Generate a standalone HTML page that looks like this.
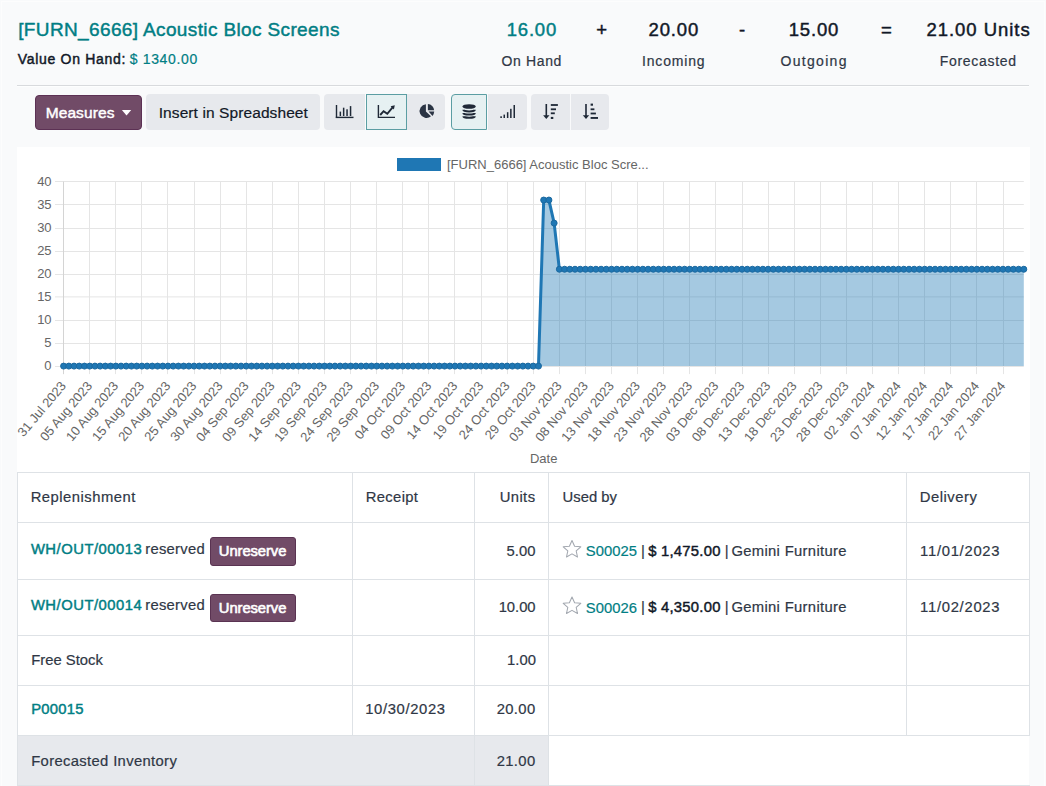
<!DOCTYPE html>
<html><head><meta charset="utf-8">
<style>
*{margin:0;padding:0;box-sizing:border-box}
html,body{width:1046px;height:786px;overflow:hidden;background:#f9fafb;font-family:"Liberation Sans",sans-serif;color:#111827}
.a{position:absolute;white-space:nowrap}
.cy{font-family:"Liberation Sans",sans-serif;font-size:13px;fill:#666}
.cx{font-family:"Liberation Sans",sans-serif;font-size:13px;fill:#666}
.btn{position:absolute;top:94px;height:36px;background:#e7e9ed}
.ln{position:absolute;background:#dee2e6}
</style></head><body>
<div class="a" style="left:1px;top:1px;width:1044px;height:800px;border:1px solid #fdfdfd"></div>
<div class="a" style="left:17px;top:85px;width:1012px;height:1px;background:#d8dadd"></div>
<div class="a" style="left:17px;top:86px;width:1012px;height:1px;background:#fdfefe"></div>

<div class="btn" style="left:35px;top:94.8px;height:34.8px;width:107px;background:#714b67;border:1px solid #5c3154;border-radius:4px"></div>
<div class="btn" style="left:146px;width:174px;border-radius:4px"></div>
<div class="btn" style="left:324px;width:41px;border-radius:4px 0 0 4px"></div>
<div class="a" style="left:365px;top:94px;width:1px;height:36px;background:#fbfcfc"></div>
<div class="btn" style="left:366px;width:41px;background:#e6f1f2;border:1px solid #5b9ea3"></div>
<div class="btn" style="left:407px;width:38px;border-radius:0 4px 4px 0"></div>
<div class="btn" style="left:451px;width:36px;background:#e6f1f2;border:1px solid #5b9ea3;border-radius:4px 0 0 4px"></div>
<div class="btn" style="left:488px;width:39px;border-radius:0 4px 4px 0"></div>
<div class="btn" style="left:531px;width:39px;border-radius:4px 0 0 4px"></div>
<div class="btn" style="left:571px;width:38px;border-radius:0 4px 4px 0"></div>

<div class="a" style="left:17px;top:147px;width:1013px;height:325px;background:#fff"></div>
<svg class="a" style="left:0;top:0" width="1046" height="786">
<line x1="55" y1="366.5" x2="1023.80" y2="366.5" stroke="#e5e5e5"/>
<line x1="55" y1="343.5" x2="1023.80" y2="343.5" stroke="#e5e5e5"/>
<line x1="55" y1="320.5" x2="1023.80" y2="320.5" stroke="#e5e5e5"/>
<line x1="55" y1="296.9" x2="1023.80" y2="296.9" stroke="#e5e5e5"/>
<line x1="55" y1="274.5" x2="1023.80" y2="274.5" stroke="#e5e5e5"/>
<line x1="55" y1="251.5" x2="1023.80" y2="251.5" stroke="#e5e5e5"/>
<line x1="55" y1="228.5" x2="1023.80" y2="228.5" stroke="#e5e5e5"/>
<line x1="55" y1="204.5" x2="1023.80" y2="204.5" stroke="#e5e5e5"/>
<line x1="55" y1="181.5" x2="1023.80" y2="181.5" stroke="#e5e5e5"/>
<line x1="63.5" y1="181.60" x2="63.5" y2="374.10" stroke="#e5e5e5"/>
<line x1="89.5" y1="181.60" x2="89.5" y2="374.10" stroke="#e5e5e5"/>
<line x1="115.5" y1="181.60" x2="115.5" y2="374.10" stroke="#e5e5e5"/>
<line x1="141.5" y1="181.60" x2="141.5" y2="374.10" stroke="#e5e5e5"/>
<line x1="167.5" y1="181.60" x2="167.5" y2="374.10" stroke="#e5e5e5"/>
<line x1="194.5" y1="181.60" x2="194.5" y2="374.10" stroke="#e5e5e5"/>
<line x1="220.5" y1="181.60" x2="220.5" y2="374.10" stroke="#e5e5e5"/>
<line x1="246.5" y1="181.60" x2="246.5" y2="374.10" stroke="#e5e5e5"/>
<line x1="272.5" y1="181.60" x2="272.5" y2="374.10" stroke="#e5e5e5"/>
<line x1="298.5" y1="181.60" x2="298.5" y2="374.10" stroke="#e5e5e5"/>
<line x1="324.5" y1="181.60" x2="324.5" y2="374.10" stroke="#e5e5e5"/>
<line x1="350.5" y1="181.60" x2="350.5" y2="374.10" stroke="#e5e5e5"/>
<line x1="376.5" y1="181.60" x2="376.5" y2="374.10" stroke="#e5e5e5"/>
<line x1="402.5" y1="181.60" x2="402.5" y2="374.10" stroke="#e5e5e5"/>
<line x1="428.5" y1="181.60" x2="428.5" y2="374.10" stroke="#e5e5e5"/>
<line x1="454.5" y1="181.60" x2="454.5" y2="374.10" stroke="#e5e5e5"/>
<line x1="481.5" y1="181.60" x2="481.5" y2="374.10" stroke="#e5e5e5"/>
<line x1="507.5" y1="181.60" x2="507.5" y2="374.10" stroke="#e5e5e5"/>
<line x1="533.5" y1="181.60" x2="533.5" y2="374.10" stroke="#e5e5e5"/>
<line x1="559.5" y1="181.60" x2="559.5" y2="374.10" stroke="#e5e5e5"/>
<line x1="585.5" y1="181.60" x2="585.5" y2="374.10" stroke="#e5e5e5"/>
<line x1="611.5" y1="181.60" x2="611.5" y2="374.10" stroke="#e5e5e5"/>
<line x1="637.5" y1="181.60" x2="637.5" y2="374.10" stroke="#e5e5e5"/>
<line x1="663.5" y1="181.60" x2="663.5" y2="374.10" stroke="#e5e5e5"/>
<line x1="689.5" y1="181.60" x2="689.5" y2="374.10" stroke="#e5e5e5"/>
<line x1="715.5" y1="181.60" x2="715.5" y2="374.10" stroke="#e5e5e5"/>
<line x1="742.5" y1="181.60" x2="742.5" y2="374.10" stroke="#e5e5e5"/>
<line x1="768.5" y1="181.60" x2="768.5" y2="374.10" stroke="#e5e5e5"/>
<line x1="794.5" y1="181.60" x2="794.5" y2="374.10" stroke="#e5e5e5"/>
<line x1="820.5" y1="181.60" x2="820.5" y2="374.10" stroke="#e5e5e5"/>
<line x1="846.5" y1="181.60" x2="846.5" y2="374.10" stroke="#e5e5e5"/>
<line x1="872.5" y1="181.60" x2="872.5" y2="374.10" stroke="#e5e5e5"/>
<line x1="898.5" y1="181.60" x2="898.5" y2="374.10" stroke="#e5e5e5"/>
<line x1="924.5" y1="181.60" x2="924.5" y2="374.10" stroke="#e5e5e5"/>
<line x1="950.5" y1="181.60" x2="950.5" y2="374.10" stroke="#e5e5e5"/>
<line x1="976.5" y1="181.60" x2="976.5" y2="374.10" stroke="#e5e5e5"/>
<line x1="1003.5" y1="181.60" x2="1003.5" y2="374.10" stroke="#e5e5e5"/>
<line x1="63.5" y1="181.60" x2="63.5" y2="374.10" stroke="#d4d4d4"/>
<text x="51.6" y="370.00" text-anchor="end" class="cy">0</text>
<text x="51.6" y="346.94" text-anchor="end" class="cy">5</text>
<text x="51.6" y="323.88" text-anchor="end" class="cy">10</text>
<text x="51.6" y="300.81" text-anchor="end" class="cy">15</text>
<text x="51.6" y="277.75" text-anchor="end" class="cy">20</text>
<text x="51.6" y="254.69" text-anchor="end" class="cy">25</text>
<text x="51.6" y="231.63" text-anchor="end" class="cy">30</text>
<text x="51.6" y="208.56" text-anchor="end" class="cy">35</text>
<text x="51.6" y="185.50" text-anchor="end" class="cy">40</text>
<text transform="translate(64.10,383.90) rotate(-50)" text-anchor="end" dominant-baseline="middle" class="cx">31 Jul 2023</text>
<text transform="translate(90.19,383.90) rotate(-50)" text-anchor="end" dominant-baseline="middle" class="cx">05 Aug 2023</text>
<text transform="translate(116.28,383.90) rotate(-50)" text-anchor="end" dominant-baseline="middle" class="cx">10 Aug 2023</text>
<text transform="translate(142.38,383.90) rotate(-50)" text-anchor="end" dominant-baseline="middle" class="cx">15 Aug 2023</text>
<text transform="translate(168.47,383.90) rotate(-50)" text-anchor="end" dominant-baseline="middle" class="cx">20 Aug 2023</text>
<text transform="translate(194.56,383.90) rotate(-50)" text-anchor="end" dominant-baseline="middle" class="cx">25 Aug 2023</text>
<text transform="translate(220.65,383.90) rotate(-50)" text-anchor="end" dominant-baseline="middle" class="cx">30 Aug 2023</text>
<text transform="translate(246.75,383.90) rotate(-50)" text-anchor="end" dominant-baseline="middle" class="cx">04 Sep 2023</text>
<text transform="translate(272.84,383.90) rotate(-50)" text-anchor="end" dominant-baseline="middle" class="cx">09 Sep 2023</text>
<text transform="translate(298.93,383.90) rotate(-50)" text-anchor="end" dominant-baseline="middle" class="cx">14 Sep 2023</text>
<text transform="translate(325.02,383.90) rotate(-50)" text-anchor="end" dominant-baseline="middle" class="cx">19 Sep 2023</text>
<text transform="translate(351.12,383.90) rotate(-50)" text-anchor="end" dominant-baseline="middle" class="cx">24 Sep 2023</text>
<text transform="translate(377.21,383.90) rotate(-50)" text-anchor="end" dominant-baseline="middle" class="cx">29 Sep 2023</text>
<text transform="translate(403.30,383.90) rotate(-50)" text-anchor="end" dominant-baseline="middle" class="cx">04 Oct 2023</text>
<text transform="translate(429.39,383.90) rotate(-50)" text-anchor="end" dominant-baseline="middle" class="cx">09 Oct 2023</text>
<text transform="translate(455.49,383.90) rotate(-50)" text-anchor="end" dominant-baseline="middle" class="cx">14 Oct 2023</text>
<text transform="translate(481.58,383.90) rotate(-50)" text-anchor="end" dominant-baseline="middle" class="cx">19 Oct 2023</text>
<text transform="translate(507.67,383.90) rotate(-50)" text-anchor="end" dominant-baseline="middle" class="cx">24 Oct 2023</text>
<text transform="translate(533.76,383.90) rotate(-50)" text-anchor="end" dominant-baseline="middle" class="cx">29 Oct 2023</text>
<text transform="translate(559.86,383.90) rotate(-50)" text-anchor="end" dominant-baseline="middle" class="cx">03 Nov 2023</text>
<text transform="translate(585.95,383.90) rotate(-50)" text-anchor="end" dominant-baseline="middle" class="cx">08 Nov 2023</text>
<text transform="translate(612.04,383.90) rotate(-50)" text-anchor="end" dominant-baseline="middle" class="cx">13 Nov 2023</text>
<text transform="translate(638.13,383.90) rotate(-50)" text-anchor="end" dominant-baseline="middle" class="cx">18 Nov 2023</text>
<text transform="translate(664.23,383.90) rotate(-50)" text-anchor="end" dominant-baseline="middle" class="cx">23 Nov 2023</text>
<text transform="translate(690.32,383.90) rotate(-50)" text-anchor="end" dominant-baseline="middle" class="cx">28 Nov 2023</text>
<text transform="translate(716.41,383.90) rotate(-50)" text-anchor="end" dominant-baseline="middle" class="cx">03 Dec 2023</text>
<text transform="translate(742.50,383.90) rotate(-50)" text-anchor="end" dominant-baseline="middle" class="cx">08 Dec 2023</text>
<text transform="translate(768.59,383.90) rotate(-50)" text-anchor="end" dominant-baseline="middle" class="cx">13 Dec 2023</text>
<text transform="translate(794.69,383.90) rotate(-50)" text-anchor="end" dominant-baseline="middle" class="cx">18 Dec 2023</text>
<text transform="translate(820.78,383.90) rotate(-50)" text-anchor="end" dominant-baseline="middle" class="cx">23 Dec 2023</text>
<text transform="translate(846.87,383.90) rotate(-50)" text-anchor="end" dominant-baseline="middle" class="cx">28 Dec 2023</text>
<text transform="translate(872.96,383.90) rotate(-50)" text-anchor="end" dominant-baseline="middle" class="cx">02 Jan 2024</text>
<text transform="translate(899.06,383.90) rotate(-50)" text-anchor="end" dominant-baseline="middle" class="cx">07 Jan 2024</text>
<text transform="translate(925.15,383.90) rotate(-50)" text-anchor="end" dominant-baseline="middle" class="cx">12 Jan 2024</text>
<text transform="translate(951.24,383.90) rotate(-50)" text-anchor="end" dominant-baseline="middle" class="cx">17 Jan 2024</text>
<text transform="translate(977.33,383.90) rotate(-50)" text-anchor="end" dominant-baseline="middle" class="cx">22 Jan 2024</text>
<text transform="translate(1003.43,383.90) rotate(-50)" text-anchor="end" dominant-baseline="middle" class="cx">27 Jan 2024</text>
<polygon points="63.60,366.10 63.60,366.10 68.82,366.10 74.04,366.10 79.26,366.10 84.47,366.10 89.69,366.10 94.91,366.10 100.13,366.10 105.35,366.10 110.57,366.10 115.78,366.10 121.00,366.10 126.22,366.10 131.44,366.10 136.66,366.10 141.88,366.10 147.10,366.10 152.31,366.10 157.53,366.10 162.75,366.10 167.97,366.10 173.19,366.10 178.41,366.10 183.62,366.10 188.84,366.10 194.06,366.10 199.28,366.10 204.50,366.10 209.72,366.10 214.94,366.10 220.15,366.10 225.37,366.10 230.59,366.10 235.81,366.10 241.03,366.10 246.25,366.10 251.47,366.10 256.68,366.10 261.90,366.10 267.12,366.10 272.34,366.10 277.56,366.10 282.78,366.10 287.99,366.10 293.21,366.10 298.43,366.10 303.65,366.10 308.87,366.10 314.09,366.10 319.31,366.10 324.52,366.10 329.74,366.10 334.96,366.10 340.18,366.10 345.40,366.10 350.62,366.10 355.83,366.10 361.05,366.10 366.27,366.10 371.49,366.10 376.71,366.10 381.93,366.10 387.15,366.10 392.36,366.10 397.58,366.10 402.80,366.10 408.02,366.10 413.24,366.10 418.46,366.10 423.68,366.10 428.89,366.10 434.11,366.10 439.33,366.10 444.55,366.10 449.77,366.10 454.99,366.10 460.20,366.10 465.42,366.10 470.64,366.10 475.86,366.10 481.08,366.10 486.30,366.10 491.52,366.10 496.73,366.10 501.95,366.10 507.17,366.10 512.39,366.10 517.61,366.10 522.83,366.10 528.04,366.10 533.26,366.10 538.48,366.10 543.70,200.05 548.92,200.05 554.14,223.11 559.36,269.24 564.57,269.24 569.79,269.24 575.01,269.24 580.23,269.24 585.45,269.24 590.67,269.24 595.88,269.24 601.10,269.24 606.32,269.24 611.54,269.24 616.76,269.24 621.98,269.24 627.20,269.24 632.41,269.24 637.63,269.24 642.85,269.24 648.07,269.24 653.29,269.24 658.51,269.24 663.73,269.24 668.94,269.24 674.16,269.24 679.38,269.24 684.60,269.24 689.82,269.24 695.04,269.24 700.25,269.24 705.47,269.24 710.69,269.24 715.91,269.24 721.13,269.24 726.35,269.24 731.57,269.24 736.78,269.24 742.00,269.24 747.22,269.24 752.44,269.24 757.66,269.24 762.88,269.24 768.09,269.24 773.31,269.24 778.53,269.24 783.75,269.24 788.97,269.24 794.19,269.24 799.41,269.24 804.62,269.24 809.84,269.24 815.06,269.24 820.28,269.24 825.50,269.24 830.72,269.24 835.93,269.24 841.15,269.24 846.37,269.24 851.59,269.24 856.81,269.24 862.03,269.24 867.25,269.24 872.46,269.24 877.68,269.24 882.90,269.24 888.12,269.24 893.34,269.24 898.56,269.24 903.77,269.24 908.99,269.24 914.21,269.24 919.43,269.24 924.65,269.24 929.87,269.24 935.09,269.24 940.30,269.24 945.52,269.24 950.74,269.24 955.96,269.24 961.18,269.24 966.40,269.24 971.62,269.24 976.83,269.24 982.05,269.24 987.27,269.24 992.49,269.24 997.71,269.24 1002.93,269.24 1008.14,269.24 1013.36,269.24 1018.58,269.24 1023.80,269.24 1023.80,366.10" fill="rgba(31,119,180,0.4)"/>
<polyline points="63.60,366.10 68.82,366.10 74.04,366.10 79.26,366.10 84.47,366.10 89.69,366.10 94.91,366.10 100.13,366.10 105.35,366.10 110.57,366.10 115.78,366.10 121.00,366.10 126.22,366.10 131.44,366.10 136.66,366.10 141.88,366.10 147.10,366.10 152.31,366.10 157.53,366.10 162.75,366.10 167.97,366.10 173.19,366.10 178.41,366.10 183.62,366.10 188.84,366.10 194.06,366.10 199.28,366.10 204.50,366.10 209.72,366.10 214.94,366.10 220.15,366.10 225.37,366.10 230.59,366.10 235.81,366.10 241.03,366.10 246.25,366.10 251.47,366.10 256.68,366.10 261.90,366.10 267.12,366.10 272.34,366.10 277.56,366.10 282.78,366.10 287.99,366.10 293.21,366.10 298.43,366.10 303.65,366.10 308.87,366.10 314.09,366.10 319.31,366.10 324.52,366.10 329.74,366.10 334.96,366.10 340.18,366.10 345.40,366.10 350.62,366.10 355.83,366.10 361.05,366.10 366.27,366.10 371.49,366.10 376.71,366.10 381.93,366.10 387.15,366.10 392.36,366.10 397.58,366.10 402.80,366.10 408.02,366.10 413.24,366.10 418.46,366.10 423.68,366.10 428.89,366.10 434.11,366.10 439.33,366.10 444.55,366.10 449.77,366.10 454.99,366.10 460.20,366.10 465.42,366.10 470.64,366.10 475.86,366.10 481.08,366.10 486.30,366.10 491.52,366.10 496.73,366.10 501.95,366.10 507.17,366.10 512.39,366.10 517.61,366.10 522.83,366.10 528.04,366.10 533.26,366.10 538.48,366.10 543.70,200.05 548.92,200.05 554.14,223.11 559.36,269.24 564.57,269.24 569.79,269.24 575.01,269.24 580.23,269.24 585.45,269.24 590.67,269.24 595.88,269.24 601.10,269.24 606.32,269.24 611.54,269.24 616.76,269.24 621.98,269.24 627.20,269.24 632.41,269.24 637.63,269.24 642.85,269.24 648.07,269.24 653.29,269.24 658.51,269.24 663.73,269.24 668.94,269.24 674.16,269.24 679.38,269.24 684.60,269.24 689.82,269.24 695.04,269.24 700.25,269.24 705.47,269.24 710.69,269.24 715.91,269.24 721.13,269.24 726.35,269.24 731.57,269.24 736.78,269.24 742.00,269.24 747.22,269.24 752.44,269.24 757.66,269.24 762.88,269.24 768.09,269.24 773.31,269.24 778.53,269.24 783.75,269.24 788.97,269.24 794.19,269.24 799.41,269.24 804.62,269.24 809.84,269.24 815.06,269.24 820.28,269.24 825.50,269.24 830.72,269.24 835.93,269.24 841.15,269.24 846.37,269.24 851.59,269.24 856.81,269.24 862.03,269.24 867.25,269.24 872.46,269.24 877.68,269.24 882.90,269.24 888.12,269.24 893.34,269.24 898.56,269.24 903.77,269.24 908.99,269.24 914.21,269.24 919.43,269.24 924.65,269.24 929.87,269.24 935.09,269.24 940.30,269.24 945.52,269.24 950.74,269.24 955.96,269.24 961.18,269.24 966.40,269.24 971.62,269.24 976.83,269.24 982.05,269.24 987.27,269.24 992.49,269.24 997.71,269.24 1002.93,269.24 1008.14,269.24 1013.36,269.24 1018.58,269.24 1023.80,269.24" fill="none" stroke="#1f77b4" stroke-width="3" stroke-linejoin="round"/>
<circle cx="63.60" cy="366.10" r="3" fill="#1f77b4" stroke="#1b69a0" stroke-width="1"/>
<circle cx="68.82" cy="366.10" r="3" fill="#1f77b4" stroke="#1b69a0" stroke-width="1"/>
<circle cx="74.04" cy="366.10" r="3" fill="#1f77b4" stroke="#1b69a0" stroke-width="1"/>
<circle cx="79.26" cy="366.10" r="3" fill="#1f77b4" stroke="#1b69a0" stroke-width="1"/>
<circle cx="84.47" cy="366.10" r="3" fill="#1f77b4" stroke="#1b69a0" stroke-width="1"/>
<circle cx="89.69" cy="366.10" r="3" fill="#1f77b4" stroke="#1b69a0" stroke-width="1"/>
<circle cx="94.91" cy="366.10" r="3" fill="#1f77b4" stroke="#1b69a0" stroke-width="1"/>
<circle cx="100.13" cy="366.10" r="3" fill="#1f77b4" stroke="#1b69a0" stroke-width="1"/>
<circle cx="105.35" cy="366.10" r="3" fill="#1f77b4" stroke="#1b69a0" stroke-width="1"/>
<circle cx="110.57" cy="366.10" r="3" fill="#1f77b4" stroke="#1b69a0" stroke-width="1"/>
<circle cx="115.78" cy="366.10" r="3" fill="#1f77b4" stroke="#1b69a0" stroke-width="1"/>
<circle cx="121.00" cy="366.10" r="3" fill="#1f77b4" stroke="#1b69a0" stroke-width="1"/>
<circle cx="126.22" cy="366.10" r="3" fill="#1f77b4" stroke="#1b69a0" stroke-width="1"/>
<circle cx="131.44" cy="366.10" r="3" fill="#1f77b4" stroke="#1b69a0" stroke-width="1"/>
<circle cx="136.66" cy="366.10" r="3" fill="#1f77b4" stroke="#1b69a0" stroke-width="1"/>
<circle cx="141.88" cy="366.10" r="3" fill="#1f77b4" stroke="#1b69a0" stroke-width="1"/>
<circle cx="147.10" cy="366.10" r="3" fill="#1f77b4" stroke="#1b69a0" stroke-width="1"/>
<circle cx="152.31" cy="366.10" r="3" fill="#1f77b4" stroke="#1b69a0" stroke-width="1"/>
<circle cx="157.53" cy="366.10" r="3" fill="#1f77b4" stroke="#1b69a0" stroke-width="1"/>
<circle cx="162.75" cy="366.10" r="3" fill="#1f77b4" stroke="#1b69a0" stroke-width="1"/>
<circle cx="167.97" cy="366.10" r="3" fill="#1f77b4" stroke="#1b69a0" stroke-width="1"/>
<circle cx="173.19" cy="366.10" r="3" fill="#1f77b4" stroke="#1b69a0" stroke-width="1"/>
<circle cx="178.41" cy="366.10" r="3" fill="#1f77b4" stroke="#1b69a0" stroke-width="1"/>
<circle cx="183.62" cy="366.10" r="3" fill="#1f77b4" stroke="#1b69a0" stroke-width="1"/>
<circle cx="188.84" cy="366.10" r="3" fill="#1f77b4" stroke="#1b69a0" stroke-width="1"/>
<circle cx="194.06" cy="366.10" r="3" fill="#1f77b4" stroke="#1b69a0" stroke-width="1"/>
<circle cx="199.28" cy="366.10" r="3" fill="#1f77b4" stroke="#1b69a0" stroke-width="1"/>
<circle cx="204.50" cy="366.10" r="3" fill="#1f77b4" stroke="#1b69a0" stroke-width="1"/>
<circle cx="209.72" cy="366.10" r="3" fill="#1f77b4" stroke="#1b69a0" stroke-width="1"/>
<circle cx="214.94" cy="366.10" r="3" fill="#1f77b4" stroke="#1b69a0" stroke-width="1"/>
<circle cx="220.15" cy="366.10" r="3" fill="#1f77b4" stroke="#1b69a0" stroke-width="1"/>
<circle cx="225.37" cy="366.10" r="3" fill="#1f77b4" stroke="#1b69a0" stroke-width="1"/>
<circle cx="230.59" cy="366.10" r="3" fill="#1f77b4" stroke="#1b69a0" stroke-width="1"/>
<circle cx="235.81" cy="366.10" r="3" fill="#1f77b4" stroke="#1b69a0" stroke-width="1"/>
<circle cx="241.03" cy="366.10" r="3" fill="#1f77b4" stroke="#1b69a0" stroke-width="1"/>
<circle cx="246.25" cy="366.10" r="3" fill="#1f77b4" stroke="#1b69a0" stroke-width="1"/>
<circle cx="251.47" cy="366.10" r="3" fill="#1f77b4" stroke="#1b69a0" stroke-width="1"/>
<circle cx="256.68" cy="366.10" r="3" fill="#1f77b4" stroke="#1b69a0" stroke-width="1"/>
<circle cx="261.90" cy="366.10" r="3" fill="#1f77b4" stroke="#1b69a0" stroke-width="1"/>
<circle cx="267.12" cy="366.10" r="3" fill="#1f77b4" stroke="#1b69a0" stroke-width="1"/>
<circle cx="272.34" cy="366.10" r="3" fill="#1f77b4" stroke="#1b69a0" stroke-width="1"/>
<circle cx="277.56" cy="366.10" r="3" fill="#1f77b4" stroke="#1b69a0" stroke-width="1"/>
<circle cx="282.78" cy="366.10" r="3" fill="#1f77b4" stroke="#1b69a0" stroke-width="1"/>
<circle cx="287.99" cy="366.10" r="3" fill="#1f77b4" stroke="#1b69a0" stroke-width="1"/>
<circle cx="293.21" cy="366.10" r="3" fill="#1f77b4" stroke="#1b69a0" stroke-width="1"/>
<circle cx="298.43" cy="366.10" r="3" fill="#1f77b4" stroke="#1b69a0" stroke-width="1"/>
<circle cx="303.65" cy="366.10" r="3" fill="#1f77b4" stroke="#1b69a0" stroke-width="1"/>
<circle cx="308.87" cy="366.10" r="3" fill="#1f77b4" stroke="#1b69a0" stroke-width="1"/>
<circle cx="314.09" cy="366.10" r="3" fill="#1f77b4" stroke="#1b69a0" stroke-width="1"/>
<circle cx="319.31" cy="366.10" r="3" fill="#1f77b4" stroke="#1b69a0" stroke-width="1"/>
<circle cx="324.52" cy="366.10" r="3" fill="#1f77b4" stroke="#1b69a0" stroke-width="1"/>
<circle cx="329.74" cy="366.10" r="3" fill="#1f77b4" stroke="#1b69a0" stroke-width="1"/>
<circle cx="334.96" cy="366.10" r="3" fill="#1f77b4" stroke="#1b69a0" stroke-width="1"/>
<circle cx="340.18" cy="366.10" r="3" fill="#1f77b4" stroke="#1b69a0" stroke-width="1"/>
<circle cx="345.40" cy="366.10" r="3" fill="#1f77b4" stroke="#1b69a0" stroke-width="1"/>
<circle cx="350.62" cy="366.10" r="3" fill="#1f77b4" stroke="#1b69a0" stroke-width="1"/>
<circle cx="355.83" cy="366.10" r="3" fill="#1f77b4" stroke="#1b69a0" stroke-width="1"/>
<circle cx="361.05" cy="366.10" r="3" fill="#1f77b4" stroke="#1b69a0" stroke-width="1"/>
<circle cx="366.27" cy="366.10" r="3" fill="#1f77b4" stroke="#1b69a0" stroke-width="1"/>
<circle cx="371.49" cy="366.10" r="3" fill="#1f77b4" stroke="#1b69a0" stroke-width="1"/>
<circle cx="376.71" cy="366.10" r="3" fill="#1f77b4" stroke="#1b69a0" stroke-width="1"/>
<circle cx="381.93" cy="366.10" r="3" fill="#1f77b4" stroke="#1b69a0" stroke-width="1"/>
<circle cx="387.15" cy="366.10" r="3" fill="#1f77b4" stroke="#1b69a0" stroke-width="1"/>
<circle cx="392.36" cy="366.10" r="3" fill="#1f77b4" stroke="#1b69a0" stroke-width="1"/>
<circle cx="397.58" cy="366.10" r="3" fill="#1f77b4" stroke="#1b69a0" stroke-width="1"/>
<circle cx="402.80" cy="366.10" r="3" fill="#1f77b4" stroke="#1b69a0" stroke-width="1"/>
<circle cx="408.02" cy="366.10" r="3" fill="#1f77b4" stroke="#1b69a0" stroke-width="1"/>
<circle cx="413.24" cy="366.10" r="3" fill="#1f77b4" stroke="#1b69a0" stroke-width="1"/>
<circle cx="418.46" cy="366.10" r="3" fill="#1f77b4" stroke="#1b69a0" stroke-width="1"/>
<circle cx="423.68" cy="366.10" r="3" fill="#1f77b4" stroke="#1b69a0" stroke-width="1"/>
<circle cx="428.89" cy="366.10" r="3" fill="#1f77b4" stroke="#1b69a0" stroke-width="1"/>
<circle cx="434.11" cy="366.10" r="3" fill="#1f77b4" stroke="#1b69a0" stroke-width="1"/>
<circle cx="439.33" cy="366.10" r="3" fill="#1f77b4" stroke="#1b69a0" stroke-width="1"/>
<circle cx="444.55" cy="366.10" r="3" fill="#1f77b4" stroke="#1b69a0" stroke-width="1"/>
<circle cx="449.77" cy="366.10" r="3" fill="#1f77b4" stroke="#1b69a0" stroke-width="1"/>
<circle cx="454.99" cy="366.10" r="3" fill="#1f77b4" stroke="#1b69a0" stroke-width="1"/>
<circle cx="460.20" cy="366.10" r="3" fill="#1f77b4" stroke="#1b69a0" stroke-width="1"/>
<circle cx="465.42" cy="366.10" r="3" fill="#1f77b4" stroke="#1b69a0" stroke-width="1"/>
<circle cx="470.64" cy="366.10" r="3" fill="#1f77b4" stroke="#1b69a0" stroke-width="1"/>
<circle cx="475.86" cy="366.10" r="3" fill="#1f77b4" stroke="#1b69a0" stroke-width="1"/>
<circle cx="481.08" cy="366.10" r="3" fill="#1f77b4" stroke="#1b69a0" stroke-width="1"/>
<circle cx="486.30" cy="366.10" r="3" fill="#1f77b4" stroke="#1b69a0" stroke-width="1"/>
<circle cx="491.52" cy="366.10" r="3" fill="#1f77b4" stroke="#1b69a0" stroke-width="1"/>
<circle cx="496.73" cy="366.10" r="3" fill="#1f77b4" stroke="#1b69a0" stroke-width="1"/>
<circle cx="501.95" cy="366.10" r="3" fill="#1f77b4" stroke="#1b69a0" stroke-width="1"/>
<circle cx="507.17" cy="366.10" r="3" fill="#1f77b4" stroke="#1b69a0" stroke-width="1"/>
<circle cx="512.39" cy="366.10" r="3" fill="#1f77b4" stroke="#1b69a0" stroke-width="1"/>
<circle cx="517.61" cy="366.10" r="3" fill="#1f77b4" stroke="#1b69a0" stroke-width="1"/>
<circle cx="522.83" cy="366.10" r="3" fill="#1f77b4" stroke="#1b69a0" stroke-width="1"/>
<circle cx="528.04" cy="366.10" r="3" fill="#1f77b4" stroke="#1b69a0" stroke-width="1"/>
<circle cx="533.26" cy="366.10" r="3" fill="#1f77b4" stroke="#1b69a0" stroke-width="1"/>
<circle cx="538.48" cy="366.10" r="3" fill="#1f77b4" stroke="#1b69a0" stroke-width="1"/>
<circle cx="543.70" cy="200.05" r="3" fill="#1f77b4" stroke="#1b69a0" stroke-width="1"/>
<circle cx="548.92" cy="200.05" r="3" fill="#1f77b4" stroke="#1b69a0" stroke-width="1"/>
<circle cx="554.14" cy="223.11" r="3" fill="#1f77b4" stroke="#1b69a0" stroke-width="1"/>
<circle cx="559.36" cy="269.24" r="3" fill="#1f77b4" stroke="#1b69a0" stroke-width="1"/>
<circle cx="564.57" cy="269.24" r="3" fill="#1f77b4" stroke="#1b69a0" stroke-width="1"/>
<circle cx="569.79" cy="269.24" r="3" fill="#1f77b4" stroke="#1b69a0" stroke-width="1"/>
<circle cx="575.01" cy="269.24" r="3" fill="#1f77b4" stroke="#1b69a0" stroke-width="1"/>
<circle cx="580.23" cy="269.24" r="3" fill="#1f77b4" stroke="#1b69a0" stroke-width="1"/>
<circle cx="585.45" cy="269.24" r="3" fill="#1f77b4" stroke="#1b69a0" stroke-width="1"/>
<circle cx="590.67" cy="269.24" r="3" fill="#1f77b4" stroke="#1b69a0" stroke-width="1"/>
<circle cx="595.88" cy="269.24" r="3" fill="#1f77b4" stroke="#1b69a0" stroke-width="1"/>
<circle cx="601.10" cy="269.24" r="3" fill="#1f77b4" stroke="#1b69a0" stroke-width="1"/>
<circle cx="606.32" cy="269.24" r="3" fill="#1f77b4" stroke="#1b69a0" stroke-width="1"/>
<circle cx="611.54" cy="269.24" r="3" fill="#1f77b4" stroke="#1b69a0" stroke-width="1"/>
<circle cx="616.76" cy="269.24" r="3" fill="#1f77b4" stroke="#1b69a0" stroke-width="1"/>
<circle cx="621.98" cy="269.24" r="3" fill="#1f77b4" stroke="#1b69a0" stroke-width="1"/>
<circle cx="627.20" cy="269.24" r="3" fill="#1f77b4" stroke="#1b69a0" stroke-width="1"/>
<circle cx="632.41" cy="269.24" r="3" fill="#1f77b4" stroke="#1b69a0" stroke-width="1"/>
<circle cx="637.63" cy="269.24" r="3" fill="#1f77b4" stroke="#1b69a0" stroke-width="1"/>
<circle cx="642.85" cy="269.24" r="3" fill="#1f77b4" stroke="#1b69a0" stroke-width="1"/>
<circle cx="648.07" cy="269.24" r="3" fill="#1f77b4" stroke="#1b69a0" stroke-width="1"/>
<circle cx="653.29" cy="269.24" r="3" fill="#1f77b4" stroke="#1b69a0" stroke-width="1"/>
<circle cx="658.51" cy="269.24" r="3" fill="#1f77b4" stroke="#1b69a0" stroke-width="1"/>
<circle cx="663.73" cy="269.24" r="3" fill="#1f77b4" stroke="#1b69a0" stroke-width="1"/>
<circle cx="668.94" cy="269.24" r="3" fill="#1f77b4" stroke="#1b69a0" stroke-width="1"/>
<circle cx="674.16" cy="269.24" r="3" fill="#1f77b4" stroke="#1b69a0" stroke-width="1"/>
<circle cx="679.38" cy="269.24" r="3" fill="#1f77b4" stroke="#1b69a0" stroke-width="1"/>
<circle cx="684.60" cy="269.24" r="3" fill="#1f77b4" stroke="#1b69a0" stroke-width="1"/>
<circle cx="689.82" cy="269.24" r="3" fill="#1f77b4" stroke="#1b69a0" stroke-width="1"/>
<circle cx="695.04" cy="269.24" r="3" fill="#1f77b4" stroke="#1b69a0" stroke-width="1"/>
<circle cx="700.25" cy="269.24" r="3" fill="#1f77b4" stroke="#1b69a0" stroke-width="1"/>
<circle cx="705.47" cy="269.24" r="3" fill="#1f77b4" stroke="#1b69a0" stroke-width="1"/>
<circle cx="710.69" cy="269.24" r="3" fill="#1f77b4" stroke="#1b69a0" stroke-width="1"/>
<circle cx="715.91" cy="269.24" r="3" fill="#1f77b4" stroke="#1b69a0" stroke-width="1"/>
<circle cx="721.13" cy="269.24" r="3" fill="#1f77b4" stroke="#1b69a0" stroke-width="1"/>
<circle cx="726.35" cy="269.24" r="3" fill="#1f77b4" stroke="#1b69a0" stroke-width="1"/>
<circle cx="731.57" cy="269.24" r="3" fill="#1f77b4" stroke="#1b69a0" stroke-width="1"/>
<circle cx="736.78" cy="269.24" r="3" fill="#1f77b4" stroke="#1b69a0" stroke-width="1"/>
<circle cx="742.00" cy="269.24" r="3" fill="#1f77b4" stroke="#1b69a0" stroke-width="1"/>
<circle cx="747.22" cy="269.24" r="3" fill="#1f77b4" stroke="#1b69a0" stroke-width="1"/>
<circle cx="752.44" cy="269.24" r="3" fill="#1f77b4" stroke="#1b69a0" stroke-width="1"/>
<circle cx="757.66" cy="269.24" r="3" fill="#1f77b4" stroke="#1b69a0" stroke-width="1"/>
<circle cx="762.88" cy="269.24" r="3" fill="#1f77b4" stroke="#1b69a0" stroke-width="1"/>
<circle cx="768.09" cy="269.24" r="3" fill="#1f77b4" stroke="#1b69a0" stroke-width="1"/>
<circle cx="773.31" cy="269.24" r="3" fill="#1f77b4" stroke="#1b69a0" stroke-width="1"/>
<circle cx="778.53" cy="269.24" r="3" fill="#1f77b4" stroke="#1b69a0" stroke-width="1"/>
<circle cx="783.75" cy="269.24" r="3" fill="#1f77b4" stroke="#1b69a0" stroke-width="1"/>
<circle cx="788.97" cy="269.24" r="3" fill="#1f77b4" stroke="#1b69a0" stroke-width="1"/>
<circle cx="794.19" cy="269.24" r="3" fill="#1f77b4" stroke="#1b69a0" stroke-width="1"/>
<circle cx="799.41" cy="269.24" r="3" fill="#1f77b4" stroke="#1b69a0" stroke-width="1"/>
<circle cx="804.62" cy="269.24" r="3" fill="#1f77b4" stroke="#1b69a0" stroke-width="1"/>
<circle cx="809.84" cy="269.24" r="3" fill="#1f77b4" stroke="#1b69a0" stroke-width="1"/>
<circle cx="815.06" cy="269.24" r="3" fill="#1f77b4" stroke="#1b69a0" stroke-width="1"/>
<circle cx="820.28" cy="269.24" r="3" fill="#1f77b4" stroke="#1b69a0" stroke-width="1"/>
<circle cx="825.50" cy="269.24" r="3" fill="#1f77b4" stroke="#1b69a0" stroke-width="1"/>
<circle cx="830.72" cy="269.24" r="3" fill="#1f77b4" stroke="#1b69a0" stroke-width="1"/>
<circle cx="835.93" cy="269.24" r="3" fill="#1f77b4" stroke="#1b69a0" stroke-width="1"/>
<circle cx="841.15" cy="269.24" r="3" fill="#1f77b4" stroke="#1b69a0" stroke-width="1"/>
<circle cx="846.37" cy="269.24" r="3" fill="#1f77b4" stroke="#1b69a0" stroke-width="1"/>
<circle cx="851.59" cy="269.24" r="3" fill="#1f77b4" stroke="#1b69a0" stroke-width="1"/>
<circle cx="856.81" cy="269.24" r="3" fill="#1f77b4" stroke="#1b69a0" stroke-width="1"/>
<circle cx="862.03" cy="269.24" r="3" fill="#1f77b4" stroke="#1b69a0" stroke-width="1"/>
<circle cx="867.25" cy="269.24" r="3" fill="#1f77b4" stroke="#1b69a0" stroke-width="1"/>
<circle cx="872.46" cy="269.24" r="3" fill="#1f77b4" stroke="#1b69a0" stroke-width="1"/>
<circle cx="877.68" cy="269.24" r="3" fill="#1f77b4" stroke="#1b69a0" stroke-width="1"/>
<circle cx="882.90" cy="269.24" r="3" fill="#1f77b4" stroke="#1b69a0" stroke-width="1"/>
<circle cx="888.12" cy="269.24" r="3" fill="#1f77b4" stroke="#1b69a0" stroke-width="1"/>
<circle cx="893.34" cy="269.24" r="3" fill="#1f77b4" stroke="#1b69a0" stroke-width="1"/>
<circle cx="898.56" cy="269.24" r="3" fill="#1f77b4" stroke="#1b69a0" stroke-width="1"/>
<circle cx="903.77" cy="269.24" r="3" fill="#1f77b4" stroke="#1b69a0" stroke-width="1"/>
<circle cx="908.99" cy="269.24" r="3" fill="#1f77b4" stroke="#1b69a0" stroke-width="1"/>
<circle cx="914.21" cy="269.24" r="3" fill="#1f77b4" stroke="#1b69a0" stroke-width="1"/>
<circle cx="919.43" cy="269.24" r="3" fill="#1f77b4" stroke="#1b69a0" stroke-width="1"/>
<circle cx="924.65" cy="269.24" r="3" fill="#1f77b4" stroke="#1b69a0" stroke-width="1"/>
<circle cx="929.87" cy="269.24" r="3" fill="#1f77b4" stroke="#1b69a0" stroke-width="1"/>
<circle cx="935.09" cy="269.24" r="3" fill="#1f77b4" stroke="#1b69a0" stroke-width="1"/>
<circle cx="940.30" cy="269.24" r="3" fill="#1f77b4" stroke="#1b69a0" stroke-width="1"/>
<circle cx="945.52" cy="269.24" r="3" fill="#1f77b4" stroke="#1b69a0" stroke-width="1"/>
<circle cx="950.74" cy="269.24" r="3" fill="#1f77b4" stroke="#1b69a0" stroke-width="1"/>
<circle cx="955.96" cy="269.24" r="3" fill="#1f77b4" stroke="#1b69a0" stroke-width="1"/>
<circle cx="961.18" cy="269.24" r="3" fill="#1f77b4" stroke="#1b69a0" stroke-width="1"/>
<circle cx="966.40" cy="269.24" r="3" fill="#1f77b4" stroke="#1b69a0" stroke-width="1"/>
<circle cx="971.62" cy="269.24" r="3" fill="#1f77b4" stroke="#1b69a0" stroke-width="1"/>
<circle cx="976.83" cy="269.24" r="3" fill="#1f77b4" stroke="#1b69a0" stroke-width="1"/>
<circle cx="982.05" cy="269.24" r="3" fill="#1f77b4" stroke="#1b69a0" stroke-width="1"/>
<circle cx="987.27" cy="269.24" r="3" fill="#1f77b4" stroke="#1b69a0" stroke-width="1"/>
<circle cx="992.49" cy="269.24" r="3" fill="#1f77b4" stroke="#1b69a0" stroke-width="1"/>
<circle cx="997.71" cy="269.24" r="3" fill="#1f77b4" stroke="#1b69a0" stroke-width="1"/>
<circle cx="1002.93" cy="269.24" r="3" fill="#1f77b4" stroke="#1b69a0" stroke-width="1"/>
<circle cx="1008.14" cy="269.24" r="3" fill="#1f77b4" stroke="#1b69a0" stroke-width="1"/>
<circle cx="1013.36" cy="269.24" r="3" fill="#1f77b4" stroke="#1b69a0" stroke-width="1"/>
<circle cx="1018.58" cy="269.24" r="3" fill="#1f77b4" stroke="#1b69a0" stroke-width="1"/>
<circle cx="1023.80" cy="269.24" r="3" fill="#1f77b4" stroke="#1b69a0" stroke-width="1"/>
<rect x="397" y="158" width="44" height="13" fill="#1f77b4"/>
<text x="447" y="168.6" class="cx">[FURN_6666] Acoustic Bloc Scre...</text>
<text x="543.70" y="463.3" text-anchor="middle" class="cx">Date</text>
</svg>

<div class="a" style="left:17px;top:472px;width:1012px;height:314px;background:#fff"></div>
<div class="a" style="left:17px;top:735px;width:531px;height:51px;background:#e7e9ed"></div>
<!-- horizontal borders -->
<div class="ln" style="left:17px;top:472px;width:1013px;height:1px"></div>
<div class="ln" style="left:17px;top:522px;width:1013px;height:1px"></div>
<div class="ln" style="left:17px;top:579px;width:1013px;height:1px"></div>
<div class="ln" style="left:17px;top:635px;width:1013px;height:1px"></div>
<div class="ln" style="left:17px;top:685px;width:1013px;height:1px"></div>
<div class="ln" style="left:17px;top:735px;width:1013px;height:1px"></div>
<div class="ln" style="left:17px;top:785px;width:1013px;height:1px"></div>
<!-- vertical borders -->
<div class="ln" style="left:17px;top:472px;width:1px;height:314px"></div>
<div class="ln" style="left:352px;top:472px;width:1px;height:263px"></div>
<div class="ln" style="left:474px;top:472px;width:1px;height:314px"></div>
<div class="ln" style="left:548px;top:472px;width:1px;height:314px"></div>
<div class="ln" style="left:906px;top:472px;width:1px;height:263px"></div>
<div class="ln" style="left:1029px;top:472px;width:1px;height:263px"></div>
<!-- unreserve buttons -->
<div class="a" style="left:210px;top:537px;width:86px;height:28.6px;background:#714b67;border:1px solid #5a3352;border-radius:3px"></div>
<div class="a" style="left:210px;top:593.5px;width:86px;height:28.6px;background:#714b67;border:1px solid #5a3352;border-radius:3px"></div>

<svg class="a" style="left:0;top:0" width="1046" height="786">
<!-- bar chart -->
<g fill="#1f2937">
<rect x="335.8" y="105" width="1.4" height="13"/><rect x="335.8" y="116.7" width="17.7" height="1.4"/>
<rect x="339.6" y="111.6" width="1.5" height="4.4"/><rect x="342.9" y="107.7" width="1.5" height="8.3"/>
<rect x="346.3" y="109.3" width="1.5" height="6.7"/><rect x="349.8" y="106.1" width="1.5" height="9.9"/>
</g>
<!-- line chart -->
<g fill="none" stroke="#1f2937">
<path d="M378.4 105 V117.4 H395" stroke-width="1.4"/>
<path d="M380.2 115 L383.6 111.2 L387.3 113.8 L392.8 107.2" stroke-width="1.9" stroke-linejoin="miter"/>
</g>
<path d="M390.6 106.2 L394.8 105.3 L393.9 109.5 Z" fill="#1f2937"/>
<!-- pie -->
<g fill="#2b3444">
<path d="M425.9 111.4 V104.2 A6.9 6.9 0 1 0 431.0 116.3 Z"/>
<path d="M427.9 110.2 V104.1 A6.3 6.3 0 0 1 434.1 110.2 Z"/>
<path d="M428.6 111.6 H434.2 A6.6 6.6 0 0 1 432.5 115.9 Z"/>
</g>
<!-- database -->
<g fill="#1f2937">
<ellipse cx="469.1" cy="106.5" rx="6.6" ry="2.3"/>
</g>
<g fill="none" stroke="#1f2937" stroke-width="2">
<path d="M463.4 109.8 A5.7 1.6 0 0 0 474.8 109.8"/>
<path d="M463.4 113.0 A5.7 1.6 0 0 0 474.8 113.0"/>
<path d="M463.4 116.2 A5.7 1.6 0 0 0 474.8 116.2"/>
</g>
<!-- signal -->
<g fill="#1f2937">
<rect x="500.3" y="116.3" width="1.6" height="1.7"/><rect x="503.5" y="114.6" width="1.5" height="3.4"/>
<rect x="506.9" y="112.2" width="1.5" height="5.8"/><rect x="510.1" y="108.8" width="1.5" height="9.2"/>
<rect x="513.5" y="105" width="1.5" height="13"/>
</g>
<!-- sort desc -->
<g fill="#1f2937">
<rect x="545.5" y="104" width="1.6" height="12"/><path d="M543.1 115.2 H549.5 L546.3 119 Z"/>
<rect x="550.8" y="104.1" width="7.1" height="1.8"/><rect x="550.8" y="108.4" width="5.2" height="1.8"/>
<rect x="550.8" y="112.4" width="4" height="1.8"/><rect x="550.8" y="116.9" width="2.5" height="2.1"/>
</g>
<!-- sort asc -->
<g fill="#1f2937">
<rect x="585.2" y="104" width="1.6" height="12"/><path d="M582.8 115.2 H589.2 L586 119 Z"/>
<rect x="590.6" y="103.6" width="2.4" height="2.1"/><rect x="590.6" y="108.4" width="3.8" height="1.8"/>
<rect x="590.6" y="112.6" width="5.3" height="1.8"/><rect x="590.6" y="117" width="7.4" height="1.9"/>
</g>
<!-- caret -->
<path d="M121.9 110 H131.2 L126.55 115.6 Z" fill="#fff"/>
<!-- stars -->
<path id="star" d="M572 540.5 L574.6 546.2 L580.8 546.8 L576.2 550.9 L577.5 557 L572 553.9 L566.5 557 L567.8 550.9 L563.2 546.8 L569.4 546.2 Z" fill="none" stroke="#a3a8b0" stroke-width="1.05" stroke-linejoin="round"/>
<use href="#star" y="56.5"/>
</svg>

<div id="title" class="a" style="top:19.92px;font-size:19px;line-height:19px;color:#017e84;font-weight:normal;-webkit-text-stroke:0.45px #017e84;letter-spacing:0.368px;left:18.20px;">[FURN_6666] Acoustic Bloc Screens</div>
<div id="voh" class="a" style="top:51.75px;font-size:14px;line-height:14px;color:#111827;font-weight:normal;-webkit-text-stroke:0.45px #111827;letter-spacing:0.708px;left:17.70px;">Value On Hand:</div>
<div id="voh2" class="a" style="top:51.75px;font-size:14px;line-height:14px;color:#017e84;font-weight:normal;-webkit-text-stroke:0.2px #017e84;letter-spacing:0.638px;left:129.80px;">$ 1340.00</div>
<div id="n1" class="a" style="top:21.14px;font-size:18.5px;line-height:18.5px;color:#017e84;font-weight:normal;-webkit-text-stroke:0.45px #017e84;letter-spacing:0.773px;left:506.80px;">16.00</div>
<div id="p1" class="a" style="top:21.14px;font-size:18.5px;line-height:18.5px;color:#111827;font-weight:normal;-webkit-text-stroke:0.45px #111827;letter-spacing:0.000px;left:596.20px;">+</div>
<div id="n2" class="a" style="top:21.14px;font-size:18.5px;line-height:18.5px;color:#111827;font-weight:normal;-webkit-text-stroke:0.45px #111827;letter-spacing:0.848px;left:648.50px;">20.00</div>
<div id="p2" class="a" style="top:21.14px;font-size:18.5px;line-height:18.5px;color:#111827;font-weight:normal;-webkit-text-stroke:0.45px #111827;letter-spacing:0.000px;left:739.10px;">-</div>
<div id="n3" class="a" style="top:21.14px;font-size:18.5px;line-height:18.5px;color:#111827;font-weight:normal;-webkit-text-stroke:0.45px #111827;letter-spacing:0.848px;left:788.70px;">15.00</div>
<div id="p3" class="a" style="top:21.14px;font-size:18.5px;line-height:18.5px;color:#111827;font-weight:normal;-webkit-text-stroke:0.45px #111827;letter-spacing:0.000px;left:880.90px;">=</div>
<div id="n4" class="a" style="top:21.14px;font-size:18.5px;line-height:18.5px;color:#111827;font-weight:normal;-webkit-text-stroke:0.45px #111827;letter-spacing:0.960px;left:926.50px;">21.00 Units</div>
<div id="l1" class="a" style="top:54.15px;font-size:14px;line-height:14px;color:#2f3745;font-weight:normal;-webkit-text-stroke:0.2px #2f3745;letter-spacing:0.626px;left:501.60px;">On Hand</div>
<div id="l2" class="a" style="top:54.15px;font-size:14px;line-height:14px;color:#2f3745;font-weight:normal;-webkit-text-stroke:0.2px #2f3745;letter-spacing:0.827px;left:642.00px;">Incoming</div>
<div id="l3" class="a" style="top:54.15px;font-size:14px;line-height:14px;color:#2f3745;font-weight:normal;-webkit-text-stroke:0.2px #2f3745;letter-spacing:1.310px;left:780.50px;">Outgoing</div>
<div id="l4" class="a" style="top:54.15px;font-size:14px;line-height:14px;color:#2f3745;font-weight:normal;-webkit-text-stroke:0.2px #2f3745;letter-spacing:0.706px;left:939.70px;">Forecasted</div>
<div id="meas" class="a" style="top:104.68px;font-size:15.5px;line-height:15.5px;color:#ffffff;font-weight:normal;-webkit-text-stroke:0.45px #ffffff;letter-spacing:0.091px;left:45.70px;">Measures</div>
<div id="ins" class="a" style="top:104.68px;font-size:15.5px;line-height:15.5px;color:#111827;font-weight:normal;-webkit-text-stroke:0.2px #111827;letter-spacing:0.093px;left:158.70px;">Insert in Spreadsheet</div>
<div id="h1" class="a" style="top:490.07px;font-size:14.8px;line-height:14.8px;color:#2f3745;font-weight:normal;-webkit-text-stroke:0.2px #2f3745;letter-spacing:0.491px;left:30.70px;">Replenishment</div>
<div id="h2" class="a" style="top:490.07px;font-size:14.8px;line-height:14.8px;color:#2f3745;font-weight:normal;-webkit-text-stroke:0.2px #2f3745;letter-spacing:0.354px;left:365.70px;">Receipt</div>
<div id="h3" class="a" style="top:490.07px;font-size:14.8px;line-height:14.8px;color:#2f3745;font-weight:normal;-webkit-text-stroke:0.2px #2f3745;letter-spacing:0.422px;right:510.52px;">Units</div>
<div id="h4" class="a" style="top:490.07px;font-size:14.8px;line-height:14.8px;color:#2f3745;font-weight:normal;-webkit-text-stroke:0.2px #2f3745;letter-spacing:0.035px;left:562.50px;">Used by</div>
<div id="h5" class="a" style="top:490.07px;font-size:14.8px;line-height:14.8px;color:#2f3745;font-weight:normal;-webkit-text-stroke:0.2px #2f3745;letter-spacing:0.507px;left:919.80px;">Delivery</div>
<div id="r0a" class="a" style="top:541.57px;font-size:14.8px;line-height:14.8px;color:#017e84;font-weight:normal;-webkit-text-stroke:0.45px #017e84;letter-spacing:0.512px;left:30.90px;">WH/OUT/00013</div>
<div id="r0b" class="a" style="top:541.57px;font-size:14.8px;line-height:14.8px;color:#2f3745;font-weight:normal;-webkit-text-stroke:0.2px #2f3745;letter-spacing:0.274px;left:145.20px;">reserved</div>
<div id="r0u" class="a" style="top:544.27px;font-size:14.8px;line-height:14.8px;color:#ffffff;font-weight:normal;-webkit-text-stroke:0.6px #ffffff;letter-spacing:-0.082px;left:218.80px;">Unreserve</div>
<div id="r0q" class="a" style="top:543.77px;font-size:14.8px;line-height:14.8px;color:#2f3745;font-weight:normal;-webkit-text-stroke:0.2px #2f3745;letter-spacing:0.031px;right:510.53px;">5.00</div>
<div id="r0s" class="a" style="top:544.17px;font-size:14.8px;line-height:14.8px;color:#017e84;font-weight:normal;-webkit-text-stroke:0.2px #017e84;letter-spacing:0.075px;left:585.70px;">S00025</div>
<div id="r0p1" class="a" style="top:543.77px;font-size:14.8px;line-height:14.8px;color:#2f3745;font-weight:normal;-webkit-text-stroke:0.2px #2f3745;letter-spacing:0.000px;left:641.00px;">|</div>
<div id="r0m" class="a" style="top:543.77px;font-size:14.8px;line-height:14.8px;color:#111827;font-weight:normal;-webkit-text-stroke:0.45px #111827;letter-spacing:0.251px;left:648.20px;">$ 1,475.00</div>
<div id="r0p2" class="a" style="top:543.77px;font-size:14.8px;line-height:14.8px;color:#2f3745;font-weight:normal;-webkit-text-stroke:0.2px #2f3745;letter-spacing:0.000px;left:724.80px;">|</div>
<div id="r0g" class="a" style="top:543.77px;font-size:14.8px;line-height:14.8px;color:#2f3745;font-weight:normal;-webkit-text-stroke:0.2px #2f3745;letter-spacing:0.327px;left:731.40px;">Gemini Furniture</div>
<div id="r0d" class="a" style="top:543.77px;font-size:14.8px;line-height:14.8px;color:#2f3745;font-weight:normal;-webkit-text-stroke:0.2px #2f3745;letter-spacing:0.716px;left:920.10px;">11/01/2023</div>
<div id="r1a" class="a" style="top:598.07px;font-size:14.8px;line-height:14.8px;color:#017e84;font-weight:normal;-webkit-text-stroke:0.45px #017e84;letter-spacing:0.512px;left:30.90px;">WH/OUT/00014</div>
<div id="r1b" class="a" style="top:598.07px;font-size:14.8px;line-height:14.8px;color:#2f3745;font-weight:normal;-webkit-text-stroke:0.2px #2f3745;letter-spacing:0.274px;left:145.20px;">reserved</div>
<div id="r1u" class="a" style="top:600.77px;font-size:14.8px;line-height:14.8px;color:#ffffff;font-weight:normal;-webkit-text-stroke:0.6px #ffffff;letter-spacing:-0.082px;left:218.80px;">Unreserve</div>
<div id="r1q" class="a" style="top:600.27px;font-size:14.8px;line-height:14.8px;color:#2f3745;font-weight:normal;-webkit-text-stroke:0.2px #2f3745;letter-spacing:-0.032px;right:510.47px;">10.00</div>
<div id="r1s" class="a" style="top:600.67px;font-size:14.8px;line-height:14.8px;color:#017e84;font-weight:normal;-webkit-text-stroke:0.2px #017e84;letter-spacing:0.075px;left:585.70px;">S00026</div>
<div id="r1p1" class="a" style="top:600.27px;font-size:14.8px;line-height:14.8px;color:#2f3745;font-weight:normal;-webkit-text-stroke:0.2px #2f3745;letter-spacing:0.000px;left:641.00px;">|</div>
<div id="r1m" class="a" style="top:600.27px;font-size:14.8px;line-height:14.8px;color:#111827;font-weight:normal;-webkit-text-stroke:0.45px #111827;letter-spacing:0.251px;left:648.20px;">$ 4,350.00</div>
<div id="r1p2" class="a" style="top:600.27px;font-size:14.8px;line-height:14.8px;color:#2f3745;font-weight:normal;-webkit-text-stroke:0.2px #2f3745;letter-spacing:0.000px;left:724.80px;">|</div>
<div id="r1g" class="a" style="top:600.27px;font-size:14.8px;line-height:14.8px;color:#2f3745;font-weight:normal;-webkit-text-stroke:0.2px #2f3745;letter-spacing:0.327px;left:731.40px;">Gemini Furniture</div>
<div id="r1d" class="a" style="top:600.27px;font-size:14.8px;line-height:14.8px;color:#2f3745;font-weight:normal;-webkit-text-stroke:0.2px #2f3745;letter-spacing:0.716px;left:920.10px;">11/02/2023</div>
<div id="r2a" class="a" style="top:653.17px;font-size:14.8px;line-height:14.8px;color:#2f3745;font-weight:normal;-webkit-text-stroke:0.2px #2f3745;letter-spacing:0.006px;left:31.20px;">Free Stock</div>
<div id="r2q" class="a" style="top:653.17px;font-size:14.8px;line-height:14.8px;color:#2f3745;font-weight:normal;-webkit-text-stroke:0.2px #2f3745;letter-spacing:-0.004px;right:510.10px;">1.00</div>
<div id="r3a" class="a" style="top:702.27px;font-size:14.8px;line-height:14.8px;color:#017e84;font-weight:normal;-webkit-text-stroke:0.45px #017e84;letter-spacing:0.274px;left:31.20px;">P00015</div>
<div id="r3r" class="a" style="top:702.27px;font-size:14.8px;line-height:14.8px;color:#2f3745;font-weight:normal;-webkit-text-stroke:0.2px #2f3745;letter-spacing:0.638px;left:365.20px;">10/30/2023</div>
<div id="r3q" class="a" style="top:702.27px;font-size:14.8px;line-height:14.8px;color:#2f3745;font-weight:normal;-webkit-text-stroke:0.2px #2f3745;letter-spacing:0.368px;right:510.47px;">20.00</div>
<div id="r4a" class="a" style="top:753.57px;font-size:14.8px;line-height:14.8px;color:#2f3745;font-weight:normal;-webkit-text-stroke:0.2px #2f3745;letter-spacing:0.347px;left:31.20px;">Forecasted Inventory</div>
<div id="r4q" class="a" style="top:753.57px;font-size:14.8px;line-height:14.8px;color:#2f3745;font-weight:normal;-webkit-text-stroke:0.2px #2f3745;letter-spacing:0.368px;right:510.47px;">21.00</div>
</body></html>
